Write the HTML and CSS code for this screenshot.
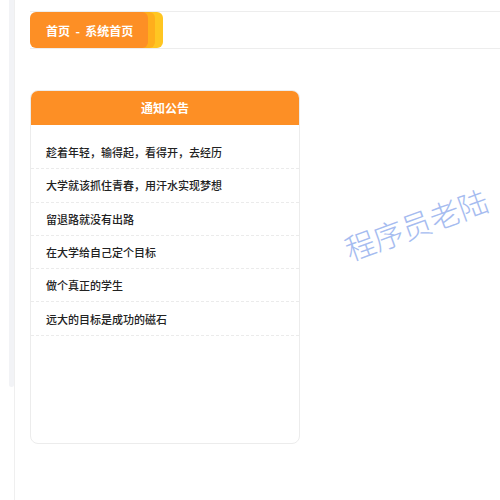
FILE: index.html
```html
<!DOCTYPE html>
<html lang="zh-CN">
<head>
<meta charset="utf-8">
<link rel="stylesheet" href="styles.css">
</head>
<body>
<div class="page">
  <div class="rail"><div class="thumb"></div></div>
  <div class="main">
    <div class="crumbbar">
      <div class="tab">首页&nbsp; - &nbsp;系统首页</div>
    </div>
    <div class="card">
      <div class="card-head">通知公告</div>
      <ul class="list">
        <li>趁着年轻，输得起，看得开，去经历</li>
        <li>大学就该抓住青春，用汗水实现梦想</li>
        <li>留退路就没有出路</li>
        <li>在大学给自己定个目标</li>
        <li>做个真正的学生</li>
        <li>远大的目标是成功的磁石</li>
      </ul>
    </div>
  </div>
  <div class="watermark">程序员老陆</div>
</div>
</body>
</html>
```
FILE: styles.css
```css
html, body {
  margin: 0;
  padding: 0;
  background: #fff;
}
body {
  font-family: "Noto Sans CJK SC", "Noto Sans", sans-serif;
  width: 500px;
  height: 500px;
  overflow: hidden;
}
.page {
  position: relative;
  display: flex;
  width: 500px;
  height: 500px;
}
.rail {
  width: 15px;
  flex: none;
  border-right: 1px solid #efefef;
  box-sizing: border-box;
  padding-left: 9px;
}
.thumb {
  width: 5px;
  height: 387px;
  background: #f2f3f6;
  border-radius: 0 0 3px 3px;
}
.main {
  flex: 1;
  padding: 11px 0 0 15px;
}
.crumbbar {
  height: 36px;
  border-top: 1px solid #ededed;
  border-bottom: 1px solid #ededed;
  display: flex;
  align-items: stretch;
}
.tab {
  width: 118px;
  box-sizing: border-box;
  background: #fd8f25;
  color: #fff;
  font-size: 12px;
  font-weight: 700;
  border-radius: 6px;
  padding-left: 16px;
  display: flex;
  align-items: center;
  box-shadow: 7px 0 0 #ffae1c, 15px 0 0 #ffc622;
  position: relative;
  z-index: 1;
  white-space: nowrap;
}
.card {
  margin-top: 41px;
  width: 270px;
  height: 354px;
  box-sizing: border-box;
  border: 1px solid #ececec;
  border-radius: 8px;
  overflow: hidden;
}
.card-head {
  height: 35px;
  background: #fd8f25;
  color: #fff;
  font-size: 12px;
  font-weight: 700;
  display: flex;
  align-items: center;
  justify-content: center;
  margin: -1px -1px 0;
}
.list {
  list-style: none;
  margin: 0;
  padding: 11px 0 0;
}
.list li {
  height: 32.3px;
  border-bottom: 1px dashed #ebebeb;
  padding-left: 15px;
  font-size: 11px;
  font-weight: 500;
  color: #222;
  display: flex;
  align-items: center;
}
.watermark {
  position: absolute;
  left: 353px;
  top: 226px;
  font-size: 30px;
  font-weight: 300;
  color: #a6bcf0;
  transform: rotate(-20deg);
  transform-origin: left bottom;
  white-space: nowrap;
  letter-spacing: 0;
}
```
